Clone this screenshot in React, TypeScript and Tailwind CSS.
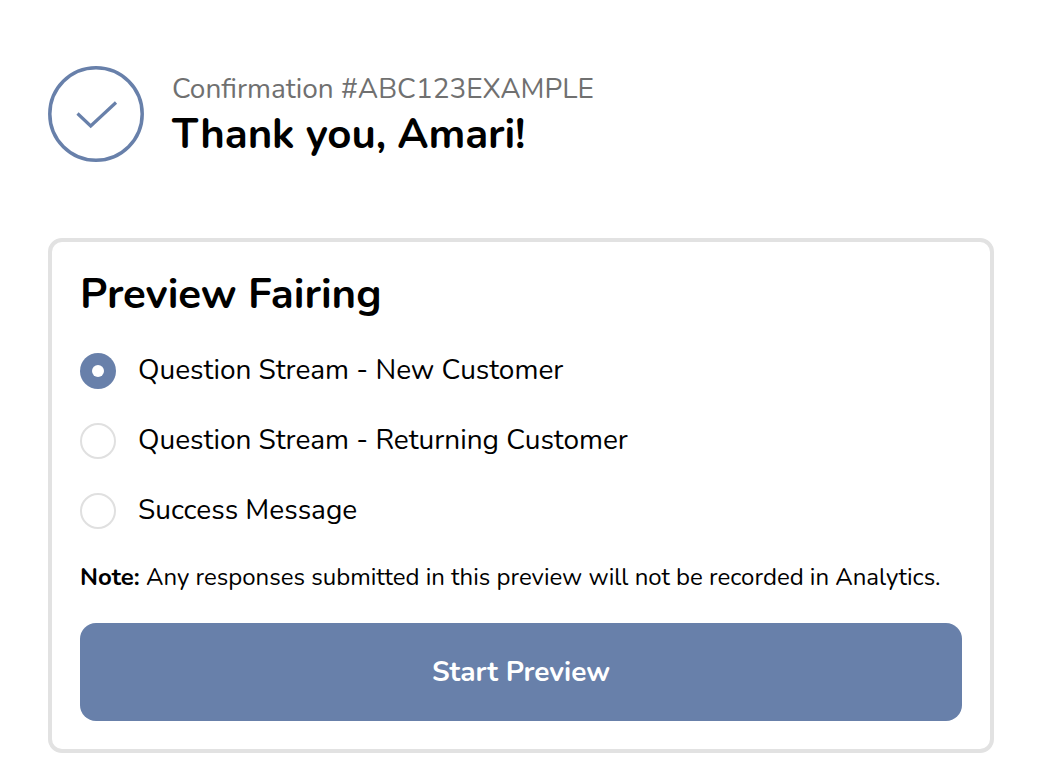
const radios = [
  { label: 'Question Stream - New Customer', checked: true },
  { label: 'Question Stream - Returning Customer', checked: false },
  { label: 'Success Message', checked: false },
];

export default function App() {
  return (
    <div className="min-h-[772px] bg-white px-[48px] pt-[66px] font-['Nunito','Noto_Sans',sans-serif]">
      <div className="flex items-center gap-[28px]">
        <svg className="shrink-0" width="96" height="96" viewBox="0 0 96 96" fill="none" stroke="#6880aa">
          <circle cx="48" cy="48" r="46.2" strokeWidth="3.5" />
          <path d="M29.500 47.500 L42.700 60 L68 36.500" strokeWidth="3.2" />
        </svg>
        <div className="mt-[4px]">
          <div className="text-[28px] leading-[36px] text-[#707070]">Confirmation #ABC123EXAMPLE</div>
          <h1 className="text-[42px] leading-[55px] font-bold tracking-[-0.1px] text-black">Thank you, Amari!</h1>
        </div>
      </div>

      <div className="mt-[76px] w-[946px] rounded-[14px] border-[4px] border-[#e2e2e2] px-[28px] pt-[25px] pb-[28px]">
        <h2 className="text-[42px] leading-[56px] font-bold text-black">Preview Fairing</h2>
        <div className="mt-[29px] flex flex-col gap-[34px]">
          {radios.map((r) => (
            <div key={r.label} className="flex h-[36px] items-center gap-[22px]">
              {r.checked ? (
                <span className="mt-[2px] flex h-[36px] w-[36px] items-center justify-center rounded-full bg-[#6880aa]">
                  <span className="h-[12px] w-[12px] rounded-full bg-white" />
                </span>
              ) : (
                <span className="mt-[2px] h-[36px] w-[36px] rounded-full border-2 border-[#e0e0e0]" />
              )}
              <span className="text-[28px] text-black">{r.label}</span>
            </div>
          ))}
        </div>
        <p className="mt-[34px] text-[24px] leading-[30px] text-black">
          <b>Note:</b> Any responses submitted in this preview will not be recorded in Analytics.
        </p>
        <button className="mt-[31px] h-[98px] w-full rounded-[16px] bg-[#6880aa] text-[28px] font-bold text-white">
          Start Preview
        </button>
      </div>
    </div>
  );
}
